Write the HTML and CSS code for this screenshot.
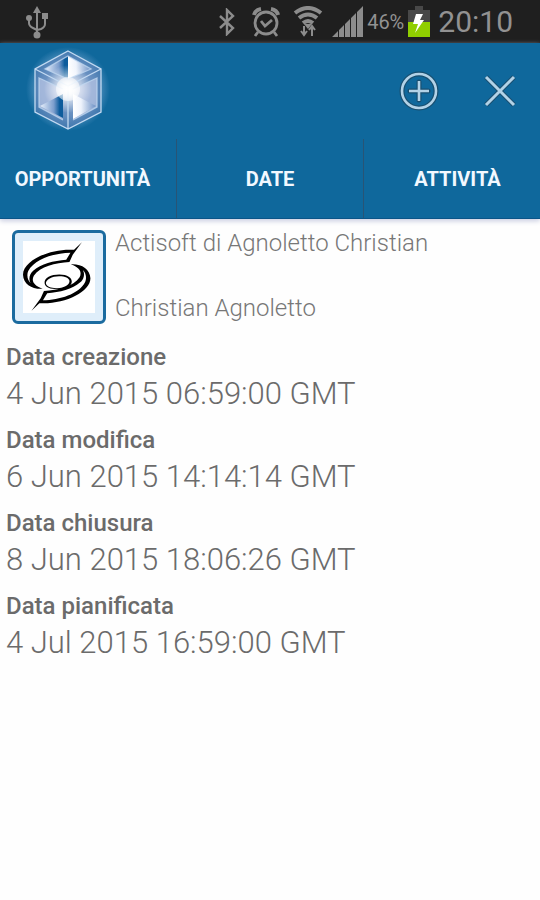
FILE: index.html
```html
<!DOCTYPE html>
<html lang="it">
<head>
<meta charset="utf-8">
<meta name="viewport" content="width=device-width, initial-scale=1">
<title>Opportunità</title>
<link rel="stylesheet" href="styles.css">
</head>
<body>
<div class="status">
  <svg class="usb" width="22" height="34" viewBox="0 0 22 34" fill="none" stroke="#8c8c8c" stroke-width="2" aria-hidden="true">
    <path d="M11 6v24M3 13v5q0 3 4 5l4 2M19 11v8q0 3-4 5l-4 1"/>
    <g fill="#8c8c8c" stroke="none"><path d="M11 1l4 7H7z"/><circle cx="3" cy="13" r="3"/><path d="M16 8h6v6h-6z"/><circle cx="11" cy="30" r="3.5"/></g>
  </svg>
  <svg class="bluetooth" width="18" height="28" viewBox="0 0 18 28" fill="none" stroke="#8c8c8c" stroke-width="2.4" aria-hidden="true">
    <path d="M2 8l13 12-6 6V2l6 6L2 20"/>
  </svg>
  <svg class="alarm" width="28" height="30" viewBox="0 0 28 30" fill="none" stroke="#8c8c8c" stroke-width="2.8" aria-hidden="true">
    <circle cx="14" cy="16" r="11"/><path d="M9 14l4 5 7-6M6 25l-3 4M22 25l3 4"/>
    <path d="M2 8q1-5 7-6M26 8q-1-5-7-6" stroke-width="4"/>
  </svg>
  <svg class="wifi" width="30" height="32" viewBox="0 0 30 32" fill="none" stroke="#8c8c8c" stroke-width="4" aria-hidden="true">
    <path d="M2 7q13-10 26 0M6 12q9-7 18 0M10 17q5-4 10 0"/>
    <path d="M11 18l4 5 4-5z" fill="#8c8c8c" stroke="none"/>
    <path d="M11 20v9M8 25l3 4 3-4M19 30V21M16 24l3-4 3 4" stroke-width="2"/>
  </svg>
  <svg class="signal" width="32" height="32" viewBox="0 0 32 32" fill="#8c8c8c" aria-hidden="true">
    <path d="M0 31l6-6v6zM7 24l5-5v12H7zM13 18l5-5v18h-5zM19 12l5-5v24h-5zM25 6l6-6v31h-6z"/>
  </svg>
  <span class="percent">46%</span>
  <svg class="battery" width="22" height="31" viewBox="0 0 22 31" aria-hidden="true">
    <path fill="#484848" d="M7 0h8v4h7v13H0V4h7z"/><path fill="#90ce00" d="M0 16h22v15H0z"/>
    <path fill="#fff" d="M8 8h7l-3 6h4L7 27l3-9H5z"/>
  </svg>
  <time class="clock">20:10</time>
</div>
<header class="header">
  <div class="bar">
    <svg class="cube" width="96" height="96" viewBox="0 0 96 96" role="img" aria-label="Logo">
      <defs>
        <radialGradient id="halo" cx="48" cy="46" r="42" gradientUnits="userSpaceOnUse">
          <stop offset="0" stop-color="#e6edff" stop-opacity=".9"/><stop offset=".65" stop-color="#b5cbed" stop-opacity=".5"/><stop offset="1" stop-color="#9fc0ea" stop-opacity="0"/>
        </radialGradient>
        <radialGradient id="core" cx="48" cy="46" r="24" gradientUnits="userSpaceOnUse">
          <stop offset="0" stop-color="#fff"/><stop offset=".25" stop-color="#fff" stop-opacity=".8"/><stop offset="1" stop-color="#fff" stop-opacity="0"/>
        </radialGradient>
        <linearGradient id="fade"><stop offset="0" stop-color="#fff"/><stop offset=".35" stop-color="#eef3fc"/><stop offset="1" stop-color="#6a8fc4"/></linearGradient>
        <linearGradient id="shade"><stop offset="0" stop-color="#eaf1fc"/><stop offset=".6" stop-color="#7b9dcd"/><stop offset=".85" stop-color="#0d5c9c"/></linearGradient>
      </defs>
      <circle cx="48" cy="46" r="42" fill="url(#halo)"/>
      <path d="M48 8l33 18v43L48 86 15 69V26z" fill="#6480b8" fill-opacity=".5"/>
      <path d="M19 35l24 11v31L19 64zM77 35L53 46v31l24-13z" fill="#bcc8e6" fill-opacity=".7"/>
      <path d="M48 13v23L25 26z" fill="url(#shade)"/><path d="M48 13l23 13-23 10z" fill="url(#fade)"/>
      <circle cx="48" cy="46" r="24" fill="url(#core)"/>
      <path d="M20 63l23-12v24z" fill="url(#shade)"/><path d="M53 51l23 12-23 13z" fill="url(#fade)"/>
      <g fill="none" stroke="#c3daf2" stroke-width="1.3">
        <path d="M48 8l33 18v43L48 86 15 69V26zM15 26l33 17 33-17M48 43v43"/>
        <path d="M48 13l23 13-23 10-23-10zM43 46L19 35v29l24 13M53 46l24-11v29L53 77" stroke-opacity=".75"/>
      </g>
      <circle cx="48" cy="46" r="12" fill="url(#core)"/>
    </svg>
    <div class="actions">
      <button class="action" type="button" aria-label="Aggiungi">
        <svg width="40" height="40" viewBox="0 0 40 40" fill="none" aria-hidden="true">
          <g stroke="#194f70" stroke-width="5" stroke-linecap="round"><circle cx="20" cy="20" r="17"/><path d="M20 11v18M11 20h18"/></g>
          <g stroke="#b2d2e7" stroke-width="2.6"><circle cx="20" cy="20" r="17"/><path d="M20 10v20M10 20h20"/></g>
        </svg>
      </button>
      <button class="action" type="button" aria-label="Chiudi">
        <svg width="40" height="40" viewBox="0 0 40 40" fill="none" aria-hidden="true">
          <path d="M6 6l28 28M34 6L6 34" stroke="#194f70" stroke-width="5"/>
          <path d="M6 6l28 28M34 6L6 34" stroke="#b2d2e7" stroke-width="3"/>
        </svg>
      </button>
    </div>
  </div>
  <nav class="tabs">
    <a class="tab" href="#opportunita">OPPORTUNITÀ</a>
    <a class="tab" href="#date">DATE</a>
    <a class="tab" href="#attivita">ATTIVITÀ</a>
  </nav>
</header>
<main class="content" id="date">
  <section class="company">
    <div class="avatar">
      <svg viewBox="66 64 220 216" role="img" aria-label="Actisoft">
        <defs>
          <path id="blade" fill-rule="evenodd" d="M246 66L222 89C150 84 66 121 66 165C67 194 94 210 126 208C98 198 91 184 99 168C118 139 165 129 208 126L218 104ZM211 98C160 99 101 117 82 154C76 167 81 185 89 190C82 179 86 161 98 152C120 132 160 122 198 119Z"/>
        </defs>
        <use href="#blade"/><use href="#blade" transform="rotate(180 169 170.5)"/>
        <path fill-rule="evenodd" d="M132 191C130 174 152 164 177 164C202 164 216 174 215 187C213 202 194 209 172 209C149 209 134 204 132 191ZM136 192C138 202 154 207 171 206C193 205 207 197 208 185C208 176 195 170 176 170C154 170 136 180 136 192Z"/>
      </svg>
    </div>
    <div class="names">
      <span>Actisoft di Agnoletto Christian</span>
      <span>Christian Agnoletto</span>
    </div>
  </section>
  <dl class="dates">
    <dt>Data creazione</dt><dd>4 Jun 2015 06:59:00 GMT</dd>
    <dt>Data modifica</dt><dd>6 Jun 2015 14:14:14 GMT</dd>
    <dt>Data chiusura</dt><dd>8 Jun 2015 18:06:26 GMT</dd>
    <dt>Data pianificata</dt><dd>4 Jul 2015 16:59:00 GMT</dd>
  </dl>
</main>
</body>
</html>
```
FILE: styles.css
```css
* { box-sizing: border-box; }
body {
  margin: 0;
  background: #fefefe;
  color: #6b6b6b;
  font-family: Roboto, "Liberation Sans", sans-serif;
}
svg { display: block; flex: none; }
.status {
  display: flex;
  align-items: center;
  height: 43px;
  padding: 0 27px 0 26px;
  background: #1f1f1f;
  color: #929292;
}
.bluetooth { margin-left: auto; }
.alarm { margin-left: 16px; }
.wifi { margin-left: 13px; }
.signal { margin-left: 9px; }
.percent { margin-left: 3px; font-size: 20px; }
.battery { margin-left: 4px; }
.clock { margin-left: 8px; font-size: 30px; }
.header {
  background: #0f689c;
  border-bottom: 1px solid #0b5588;
  box-shadow: 0 2px 5px #c8cce0;
}
.bar {
  display: flex;
  align-items: center;
  justify-content: space-between;
  height: 96px;
  padding: 0 20px;
}
.actions { display: flex; gap: 41px; }
.action { padding: 0; border: 0; background: none; cursor: pointer; }
.tabs { display: grid; grid-template-columns: 176fr 187fr 177fr; height: 79px; }
.tab {
  display: flex;
  align-items: center;
  justify-content: center;
  padding-top: 1px;
  color: #f2f8ff;
  font-size: 20px;
  font-weight: 700;
  text-decoration: none;
}
.tab + .tab { border-left: 1px solid #285475; }
.tab:first-child { padding-right: 11px; }
.tab:last-child { padding-left: 11px; }
.company { display: flex; gap: 9px; padding: 11px 12px 0; }
.avatar {
  flex: none;
  width: 94px;
  height: 94px;
  padding: 8px;
  border: 3px solid #1b6b9f;
  border-radius: 6px;
  background: #dfeefa;
}
.avatar svg { width: 100%; height: 100%; background: #fff; }
.names {
  display: flex;
  flex-direction: column;
  justify-content: space-between;
  padding-bottom: 3px;
  color: #777;
  font-size: 24px;
  font-weight: 300;
  line-height: 26px;
}
.dates { margin: 16px 6px; }
.dates dt { font-size: 24px; font-weight: 500; line-height: 34px; }
.dates dd {
  margin: 0;
  padding-bottom: 9px;
  font-size: 31px;
  font-weight: 300;
  line-height: 40px;
}
```
